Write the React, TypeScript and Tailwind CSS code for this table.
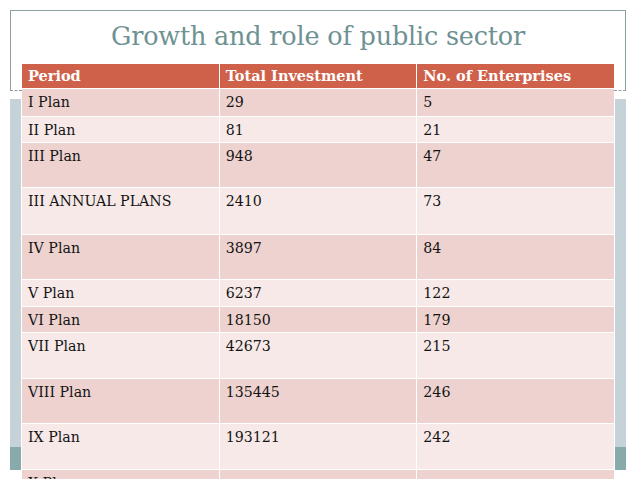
const rows: { period: string; invest: string; count: string; h: string }[] = [
  { period: "I Plan", invest: "29", count: "5", h: "h-[28px]" },
  { period: "II Plan", invest: "81", count: "21", h: "h-[26px]" },
  { period: "III Plan", invest: "948", count: "47", h: "h-[45px]" },
  { period: "III ANNUAL PLANS", invest: "2410", count: "73", h: "h-[47px]" },
  { period: "IV Plan", invest: "3897", count: "84", h: "h-[45px]" },
  { period: "V Plan", invest: "6237", count: "122", h: "h-[27px]" },
  { period: "VI Plan", invest: "18150", count: "179", h: "h-[26px]" },
  { period: "VII Plan", invest: "42673", count: "215", h: "h-[46px]" },
  { period: "VIII Plan", invest: "135445", count: "246", h: "h-[45px]" },
  { period: "IX Plan", invest: "193121", count: "242", h: "h-[46px]" },
  { period: "X Plan", invest: "", count: "", h: "h-[46px]" },
]

function SideBand({ side }: { side: "left" | "right" }) {
  const edge = side === "left" ? "border-l" : "border-r"
  return (
    <div className="flex w-[12px] shrink-0 flex-col">
      <div className={`h-[79px] ${edge} border-[#8d9fa3]`} />
      <div className="h-0 border-t border-dashed border-[#8d9fa3]" />
      <div className={`mt-[8px] flex flex-col ${side === "left" ? "mr-[1px]" : "ml-[1px]"}`}>
        <div className="h-[348px] bg-[#c5d3d9]" />
        <div className="h-[23px] bg-[#89aaab]" />
      </div>
    </div>
  )
}

export default function App() {
  return (
    <div className="h-[479px] w-[638px] overflow-hidden bg-white pl-[10px] pr-[12px] pt-[10px] font-['DejaVu_Serif',serif]">
      <div className="flex border-t border-[#8d9fa3]">
        <SideBand side="left" />

        <div className="w-[592px] shrink-0">
          {/* Title */}
          <div className="flex h-[53px] items-center justify-center pb-[2px]">
            <h1 className="text-[25.5px] font-normal tracking-[-0.2px] text-[#6e9192]">
              Growth and role of public sector
            </h1>
          </div>

          {/* Table */}
          <div className="grid h-[24px] grid-cols-3 gap-x-[1px] bg-white">
            {["Period", "Total Investment", "No. of Enterprises"].map((t) => (
              <div key={t} className="flex items-center bg-[#cf614a] pl-[6px] text-[14.5px] font-bold text-white">
                {t}
              </div>
            ))}
          </div>
          {rows.map((r, i) => (
            <div
              key={r.period}
              className={`grid grid-cols-3 gap-x-[1px] border-t border-white bg-white ${r.h}`}
            >
              {[r.period, r.invest, r.count].map((c, j) => (
                <div
                  key={j}
                  className={`pl-[6px] pt-[4px] text-[14.2px] leading-[18px] text-[#141414] ${
                    i % 2 === 0 ? "bg-[#edd2cf]" : "bg-[#f7e9e8]"
                  }`}
                >
                  {c}
                </div>
              ))}
            </div>
          ))}
        </div>

        <SideBand side="right" />
      </div>
    </div>
  )
}
